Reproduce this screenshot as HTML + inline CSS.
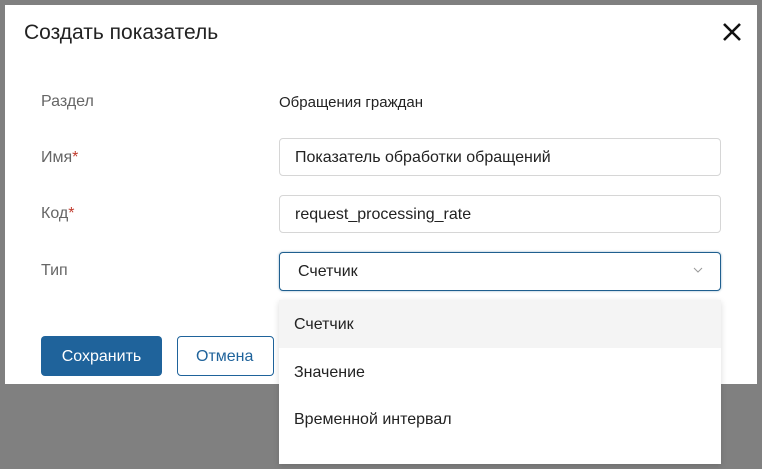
<!DOCTYPE html>
<html><head><meta charset="utf-8"><style>
body{margin:0;width:762px;height:469px;background:#808080;font-family:"Liberation Sans",sans-serif;position:relative;overflow:hidden;color:#222}
.modal{position:absolute;left:5px;top:5px;width:752px;height:379px;background:#fff}
.a{position:absolute;white-space:nowrap}
.lbl{color:#666;font-size:16px}
.in{position:absolute;left:279px;width:442px;height:38px;border:1px solid #d6d6d6;border-radius:4px;box-sizing:border-box;font-size:16px;line-height:38px;padding-left:15px;background:#fff}
.red{color:#c0392b}
.dd{position:absolute;left:279px;top:300px;width:442px;height:164px;background:#fff;box-shadow:0 2px 6px rgba(0,0,0,.15)}
.it{position:absolute;left:0;width:442px;height:48px;font-size:16px;line-height:50px;padding-left:15px;box-sizing:border-box}
</style></head><body>
<div class="modal"></div>
<div class="a" style="left:24px;top:21px;font-size:21px;color:#222">Создать показатель</div>
<svg class="a" style="left:722px;top:22px" width="20" height="20" viewBox="0 0 20 20"><path d="M2 2L18 18M18 2L2 18" stroke="#111" stroke-width="2.6"/></svg>
<div class="a lbl" style="left:41px;top:93px">Раздел</div>
<div class="a" style="left:279px;top:94px;font-size:15px">Обращения граждан</div>
<div class="a lbl" style="left:41px;top:149px">Имя<span class="red">*</span></div>
<div class="in" style="top:138px">Показатель обработки обращений</div>
<div class="a lbl" style="left:41px;top:205px">Код<span class="red">*</span></div>
<div class="in" style="top:195px">request_processing_rate</div>
<div class="a lbl" style="left:41px;top:262px">Тип</div>
<div class="in" style="top:252px;height:39px;border:1px solid #1f5f8f;box-shadow:0 0 2px rgba(31,95,143,.5);padding-left:18px">Счетчик</div>
<svg class="a" style="left:693px;top:267px" width="10" height="7" viewBox="0 0 10 7"><path d="M1 1L5 5L9 1" stroke="#999" fill="none" stroke-width="1"/></svg>
<div class="a" style="left:41px;top:336px;width:121px;height:40px;background:#1f639b;border-radius:4px;color:#fff;font-size:16px;line-height:41px;text-align:center">Сохранить</div>
<div class="a" style="left:177px;top:336px;width:97px;height:40px;border:1px solid #1f639b;box-sizing:border-box;border-radius:4px;color:#1f639b;font-size:16px;line-height:39px;padding-left:18px">Отмена</div>
<div class="dd">
<div class="it" style="top:0;background:#f4f4f4">Счетчик</div>
<div class="it" style="top:48px">Значение</div>
<div class="it" style="top:95px">Временной интервал</div>
</div>
</body></html>
